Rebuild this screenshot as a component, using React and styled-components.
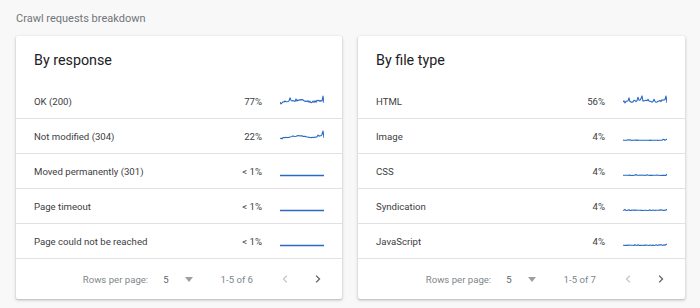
import React from "react";
import styled, { createGlobalStyle } from "styled-components";

const Global = createGlobalStyle`
  html, body { margin: 0; padding: 0; background: #f8f8f8; }
  body { font-family: Roboto, "Noto Sans", Arial, sans-serif; }
  * { box-sizing: border-box; }
`;

const Page = styled.div`
  width: 700px;
  height: 308px;
  padding: 12px 16px 0 16px;
  background: #f8f8f8;
`;

const Heading = styled.div`
  font-size: 11px;
  color: #70757a;
  height: 24px;
  line-height: 14px;
`;

const Cards = styled.div`
  display: grid;
  grid-template-columns: 326px 327px;
  gap: 16px;
`;

const Card = styled.div`
  background: #fff;
  border-radius: 2px;
  box-shadow: 0 1px 2px rgba(60, 64, 67, 0.25), 0 1px 3px 1px rgba(60, 64, 67, 0.1);
  display: flex;
  flex-direction: column;
  height: 263px;
`;

const CardTitle = styled.div`
  height: 48px;
  padding: 14px 18px 0;
  font-size: 14.3px;
  color: #202124;
  line-height: 20px;
`;

const Row = styled.div`
  height: 35px;
  display: grid;
  grid-template-columns: 1fr auto 44px;
  column-gap: 18px;
  align-items: center;
  padding: 0 18px;
  border-bottom: 1px solid #e2e2e2;
  font-size: 9.6px;
  color: #3c4043;
`;

const Label = styled.span``;

const Pct = styled.span`
  text-align: right;
`;

const Spark = styled.svg`
  display: block;
  width: 44px;
  height: 16px;
`;

const Footer = styled.div`
  flex: 1;
  display: flex;
  align-items: center;
  justify-content: flex-end;
  padding-right: 12px;
  font-size: 9.6px;
  color: #80868b;
`;

const RowsLabel = styled.span`
  margin-right: 15px;
`;

const SelectValue = styled.span`
  color: #5f6368;
`;

const Caret = styled.span`
  width: 0;
  height: 0;
  border-left: 4.5px solid transparent;
  border-right: 4.5px solid transparent;
  border-top: 5px solid #9aa0a6;
  margin: 1px 28px 0 16px;
`;

const Range = styled.span`
  margin-right: 20px;
`;

const NavBtn = styled.button`
  width: 24px;
  height: 24px;
  border: 0;
  background: transparent;
  padding: 0;
  display: flex;
  align-items: center;
  justify-content: center;
  margin-left: ${(p) => (p.$first ? "0" : "9px")};
  cursor: pointer;
`;

function rng(seed) {
  let s = seed;
  return () => {
    s = (s * 9301 + 49297) % 233280;
    return s / 233280;
  };
}

function sparkPath(seed, amp, kind) {
  const r = rng(seed);
  const n = 45;
  const pts = [];
  for (let i = 0; i < n; i++) {
    const x = (i / (n - 1)) * 44;
    let y;
    if (kind === "flat") {
      y = 12.5;
    } else if (kind === "tiny") {
      y = 12.5 - (r() < 0.2 ? r() * 1.2 : r() * 0.4);
      if (i === n - 1) y = 11;
    } else {
      const base = 9 + Math.sin(i / 4) * 0.8;
      const spike = r() < 0.18 ? r() * amp : r() * amp * 0.35;
      y = base - spike + (i < 3 ? 2 : 0);
      if (i === n - 2) y = 3;
      if (i === n - 1) y = 10;
    }
    pts.push(`${x.toFixed(1)},${y.toFixed(1)}`);
  }
  return pts.join(" ");
}

function Sparkline({ seed, amp, kind }) {
  return (
    <Spark viewBox="0 0 44 16">
      <polyline
        points={sparkPath(seed, amp, kind)}
        fill="none"
        stroke="#2a6ac4"
        strokeWidth={kind === "flat" ? 1.3 : 1.1}
        strokeLinejoin="round"
      />
    </Spark>
  );
}

const Chevron = ({ dir, color }) => (
  <svg width="18" height="18" viewBox="0 0 24 24">
    <path
      d={dir === "left" ? "M14.5 7.5 10 12l4.5 4.5" : "M9.5 7.5 14 12l-4.5 4.5"}
      fill="none"
      stroke={color}
      strokeWidth="1.8"
    />
  </svg>
);

function Table({ title, rows, total }) {
  return (
    <Card>
      <CardTitle>{title}</CardTitle>
      {rows.map((r) => (
        <Row key={r.label}>
          <Label>{r.label}</Label>
          <Pct>{r.pct}</Pct>
          <Sparkline seed={r.seed} amp={r.amp} kind={r.kind} />
        </Row>
      ))}
      <Footer>
        <RowsLabel>Rows per page:</RowsLabel>
        <SelectValue>5</SelectValue>
        <Caret />
        <Range>{total}</Range>
        <NavBtn $first aria-label="Previous page">
          <Chevron dir="left" color="#c4c7ca" />
        </NavBtn>
        <NavBtn aria-label="Next page">
          <Chevron dir="right" color="#5f6368" />
        </NavBtn>
      </Footer>
    </Card>
  );
}

const responseRows = [
  { label: "OK (200)", pct: "77%", seed: 11, amp: 6, kind: "wave" },
  { label: "Not modified (304)", pct: "22%", seed: 27, amp: 2, kind: "wave2" },
  { label: "Moved permanently (301)", pct: "< 1%", kind: "flat" },
  { label: "Page timeout", pct: "< 1%", kind: "flat" },
  { label: "Page could not be reached", pct: "< 1%", kind: "flat" },
];

const fileRows = [
  { label: "HTML", pct: "56%", seed: 41, amp: 6, kind: "wave" },
  { label: "Image", pct: "4%", seed: 5, kind: "tiny" },
  { label: "CSS", pct: "4%", seed: 8, kind: "tiny" },
  { label: "Syndication", pct: "4%", seed: 13, kind: "tiny" },
  { label: "JavaScript", pct: "4%", seed: 19, kind: "tiny" },
];

export default function App() {
  return (
    <>
      <Global />
      <Page>
        <Heading>Crawl requests breakdown</Heading>
        <Cards>
          <Table title="By response" rows={responseRows} total="1-5 of 6" />
          <Table title="By file type" rows={fileRows} total="1-5 of 7" />
        </Cards>
      </Page>
    </>
  );
}
